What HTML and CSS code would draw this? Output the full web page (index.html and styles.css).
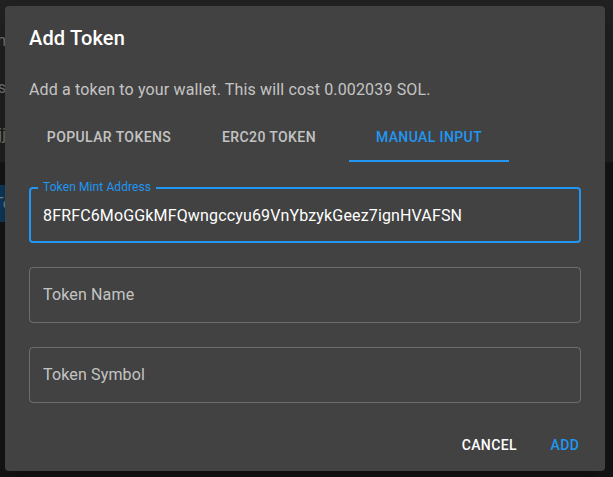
FILE: index.html
```html
<!DOCTYPE html>
<html lang="en">
<head>
<meta charset="utf-8">
<title>Add Token</title>
<link rel="stylesheet" href="styles.css">
</head>
<body>
<div class="app">
  <div class="app-top">
    <div class="bg-line l1">Solana transaction(</div>
    <div class="bg-line l2">Addresses</div>
    <div class="bg-line l3">Deployed mint pubkey bijj</div>
  </div>
  <div class="app-list">
    <div class="bg-row">Token</div>
  </div>
</div>

<div class="dialog" role="dialog">
  <h2 class="dialog-title">Add Token</h2>
  <div class="dialog-content">
    <p class="dialog-text">Add a token to your wallet. This will cost 0.002039 SOL.</p>
    <div class="tabs">
      <div class="tab">Popular Tokens</div>
      <div class="tab">ERC20 Token</div>
      <div class="tab tab-active">Manual Input</div>
    </div>
    <div class="fields">
      <div class="field field-focused">
        <span class="field-label">Token Mint Address</span>
        <span class="field-value">8FRFC6MoGGkMFQwngccyu69VnYbzykGeez7ignHVAFSN</span>
      </div>
      <div class="field">
        <span class="field-placeholder">Token Name</span>
      </div>
      <div class="field">
        <span class="field-placeholder">Token Symbol</span>
      </div>
    </div>
  </div>
  <div class="dialog-actions">
    <button class="btn btn-default">Cancel</button>
    <button class="btn btn-primary">Add</button>
  </div>
</div>
</body>
</html>
```

FILE: styles.css
```css
* { box-sizing: border-box; }

html, body {
  margin: 0;
  padding: 0;
  width: 613px;
  height: 477px;
  overflow: hidden;
  background: #171717;
  font-family: Roboto, "Noto Sans", "Liberation Sans", sans-serif;
  color: #fff;
}

.app {
  width: 613px;
  height: 477px;
}

.app-top {
  height: 162px;
  background: #232323;
  padding-top: 30px;
  display: flex;
  flex-direction: column;
  gap: 26px;
}

.bg-line {
  font-size: 16px;
  line-height: 21px;
  color: #7d7d7d;
  white-space: nowrap;
  direction: rtl;
  width: 6px;
  overflow: hidden;
}

.app-list {
  padding-top: 23px;
}

.bg-row {
  height: 37px;
  width: 10px;
  background: #0e3d62;
  color: #7f8d99;
  font-size: 16px;
  line-height: 37px;
  overflow: hidden;
  white-space: nowrap;
  text-indent: -6px;
}

.dialog {
  position: absolute;
  left: 5px;
  top: 6px;
  width: 600px;
  background: #424242;
  border-radius: 4px;
  box-shadow: 0 11px 15px -7px rgba(0,0,0,0.2), 0 24px 38px 3px rgba(0,0,0,0.14), 0 9px 46px 8px rgba(0,0,0,0.12);
  display: flex;
  flex-direction: column;
}

.dialog-title {
  margin: 0;
  padding: 16px 24px;
  font-size: 20px;
  font-weight: 500;
  line-height: 32px;
  letter-spacing: 0.15px;
  color: #fff;
}

.dialog-content {
  padding: 8px 24px 8px;
}

.dialog-text {
  margin: 0 0 12px;
  font-size: 16px;
  line-height: 24px;
  letter-spacing: 0.15px;
  color: rgba(255,255,255,0.7);
}

.tabs {
  display: flex;
  height: 48px;
}

.tab {
  width: 160px;
  height: 48px;
  display: flex;
  align-items: center;
  justify-content: center;
  border-bottom: 2px solid transparent;
  font-size: 14px;
  font-weight: 500;
  letter-spacing: 0.4px;
  text-transform: uppercase;
  color: rgba(255,255,255,0.7);
}

.tab-active {
  color: #2196f3;
  border-bottom-color: #2196f3;
}

.fields {
  display: flex;
  flex-direction: column;
  gap: 24px;
  padding: 25px 0 8px;
}

.field {
  position: relative;
  height: 56px;
  border: 1px solid rgba(255,255,255,0.23);
  border-radius: 4px;
  padding: 0 13px;
  display: flex;
  align-items: center;
  font-size: 16px;
}

.field-focused {
  border: 2px solid #2196f3;
  padding: 0 12px;
}

.field-label {
  position: absolute;
  left: 7px;
  top: -9px;
  padding: 0 5px;
  background: #424242;
  font-size: 12px;
  line-height: 14px;
  color: #2196f3;
  letter-spacing: 0.1px;
}

.field-value {
  color: #fff;
  line-height: 20px;
  letter-spacing: 0.15px;
  padding-top: 1px;
}

.field-placeholder {
  color: rgba(255,255,255,0.7);
  line-height: 20px;
  letter-spacing: 0.15px;
}

.dialog-actions {
  display: flex;
  justify-content: flex-end;
  align-items: center;
  gap: 8px;
  padding: 8px;
}

.btn {
  min-width: 64px;
  height: 36px;
  padding: 6px 8px;
  border: 0;
  border-radius: 4px;
  background: transparent;
  font-family: inherit;
  font-size: 14px;
  font-weight: 500;
  line-height: 24px;
  letter-spacing: 0.4px;
  text-transform: uppercase;
  cursor: pointer;
}

.btn-default { color: #fff; }
.btn-primary { color: #2196f3; }
```
